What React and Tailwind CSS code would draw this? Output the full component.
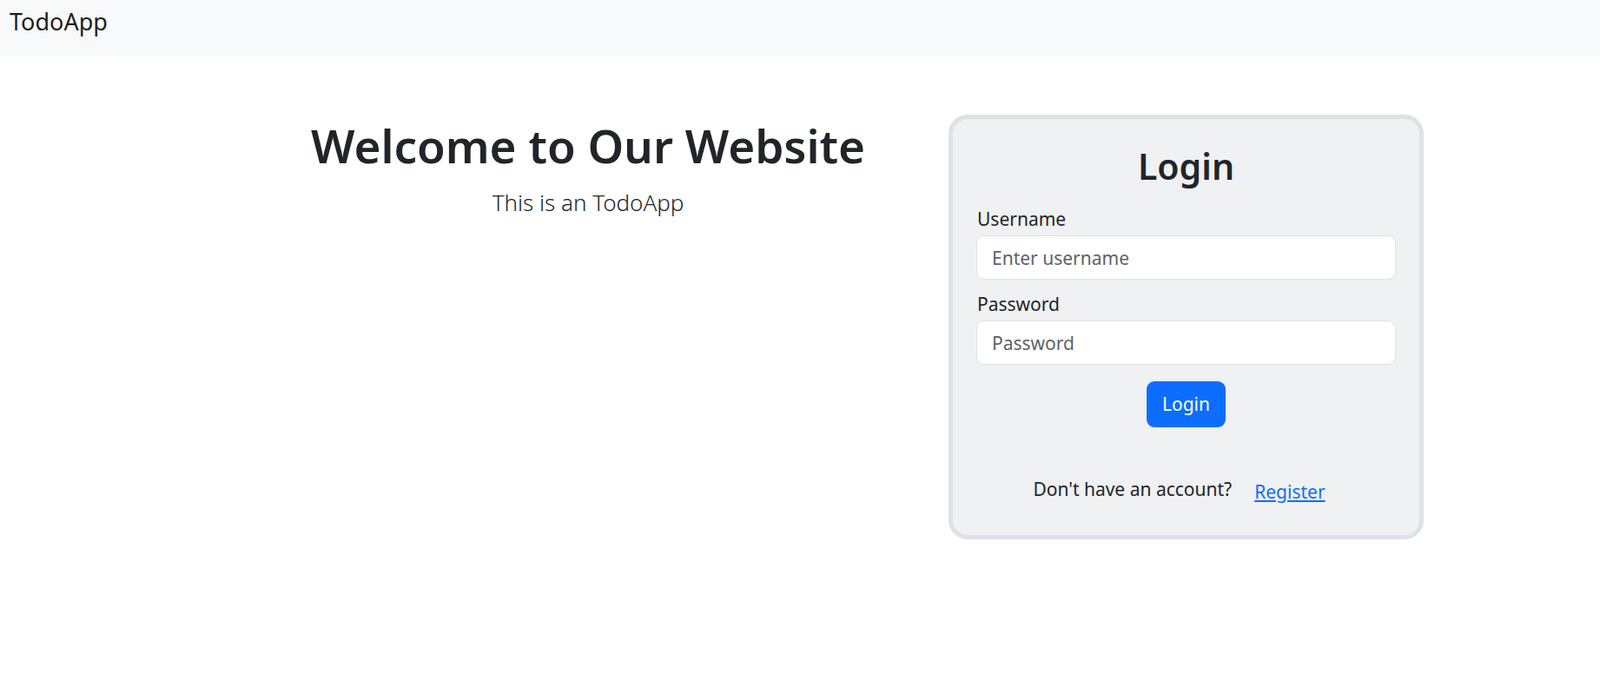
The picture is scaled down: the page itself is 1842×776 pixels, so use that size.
export default function App() {
  const font = { fontFamily: '"Noto Sans", "Open Sans", sans-serif' };
  return (
    <div className="min-h-screen w-full bg-white text-[#212529]" style={font}>
      <nav className="h-[65px] bg-[#f8f9fa] pl-[11px] pt-[11px]">
        <span className="block text-[27px] leading-[27px] text-black/90">TodoApp</span>
      </nav>
      <div className="flex pt-[67px]">
        <div className="ml-[300px] w-[754px] flex flex-col items-center">
          <h1 className="text-[53px] leading-[72px] font-semibold text-[#212529] whitespace-nowrap">
            Welcome to Our Website
          </h1>
          <p className="mt-[8px] text-[26px] leading-[42px] font-light text-[#212529]">This is an TodoApp</p>
        </div>
        <div className="ml-[38px] w-[547px] rounded-[22px] border-[5px] border-[#dee2e6] bg-[#eff1f3] px-[27px] pt-[25px] pb-[33px]">
          <h2 className="text-center text-[41px] leading-[58px] font-semibold text-[#212529]">Login</h2>
          <label className="mt-[16px] block pl-px text-[21px] leading-[33px] text-[#212529]">Username</label>
          <input
            type="text"
            placeholder="Enter username"
            className="mt-[2px] block h-[51px] w-full rounded-[9px] border border-[#dee2e6] bg-white px-[17px] text-[21px] text-[#212529] outline-none placeholder:text-[#5c636a]"
          />
          <label className="mt-[12px] block pl-px text-[21px] leading-[33px] text-[#212529]">Password</label>
          <input
            type="password"
            placeholder="Password"
            className="mt-[2px] block h-[51px] w-full rounded-[9px] border border-[#dee2e6] bg-white px-[17px] text-[21px] text-[#212529] outline-none placeholder:text-[#5c636a]"
          />
          <div className="mt-[19px] flex justify-center">
            <button className="h-[53px] w-[91px] rounded-[9px] bg-[#0d6efd] text-[21px] text-white">Login</button>
          </div>
          <div className="mt-[55px] flex justify-center">
            <span className="text-[21px] leading-[33px] text-[#212529]">Don't have an account?</span>
            <a href="#" className="ml-[26px] mt-[3px] pr-[16px] text-[21px] leading-[33px] text-[#0d6efd] underline">
              Register
            </a>
          </div>
        </div>
      </div>
    </div>
  );
}
